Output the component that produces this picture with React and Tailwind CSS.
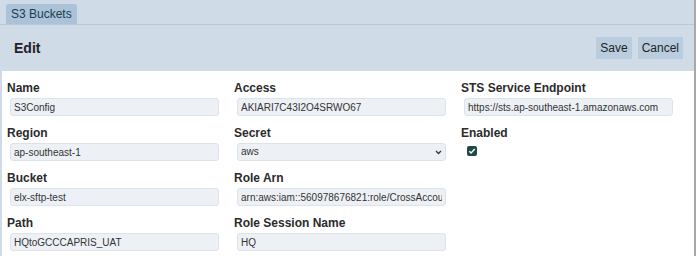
const Field = ({ label, value, children }) => (
    <div className="mb-[9px]">
        <div className="text-xs font-bold leading-4 text-[#2b2b2b]">{label}</div>
        {children || (
            <input
                readOnly
                value={value}
                className="mt-[2px] ml-[3px] block h-[18px] w-[209px] rounded-[3px] border border-[#dce3eb] bg-[#edf1f6] px-[3px] text-[10px] leading-4 text-[#333] outline-none"
            />
        )}
    </div>
);

const App = () => {
    return (
        <div className="h-[256px] w-[696px] overflow-hidden border-r-2 border-[#a8a8a8] bg-white font-['Liberation_Sans',Arial,sans-serif]">
            {/* tab strip */}
            <div className="flex h-[25px] items-end border-b border-[#b5c9db] bg-[#cfdbe6] pl-[6px]">
                <div className="flex h-[20px] items-center rounded-t-[3px] bg-[#aac3d8] px-[5px] text-xs text-[#1c3a4c]">
                    S3 Buckets
                </div>
            </div>

            {/* header */}
            <div className="flex h-[46px] items-center justify-between bg-[#cfdbe6] pl-[14px] pr-[11px]">
                <h1 className="text-sm font-bold text-[#222]">Edit</h1>
                <div className="flex gap-[6px]">
                    <button className="h-[22px] bg-[#b9cddf] px-[4px] text-xs text-[#222]">Save</button>
                    <button className="h-[22px] bg-[#b9cddf] px-[4px] text-xs text-[#222]">Cancel</button>
                </div>
            </div>

            {/* form */}
            <div className="flex h-[185px] border-l-2 border-[#cfdbe6] pl-[5px] pt-[9px]">
                <div className="w-[227px]">
                    <Field label="Name" value="S3Config" />
                    <Field label="Region" value="ap-southeast-1" />
                    <Field label="Bucket" value="elx-sftp-test" />
                    <Field label="Path" value="HQtoGCCCAPRIS_UAT" />
                </div>
                <div className="w-[227px]">
                    <Field label="Access" value="AKIARI7C43I2O4SRWO67" />
                    <Field label="Secret">
                        <div className="relative mt-[2px] ml-[3px] w-[209px]">
                            <select
                                defaultValue="aws"
                                className="block h-[18px] w-full appearance-none rounded-[3px] border border-[#dce3eb] bg-[#edf1f6] px-[3px] text-[10px] leading-4 text-[#333] outline-none"
                            >
                                <option value="aws">aws</option>
                            </select>
                            <svg className="pointer-events-none absolute right-[4px] top-[7px]" width="7" height="5" viewBox="0 0 7 5">
                                <path d="M1 1l2.5 2.5L6 1" fill="none" stroke="#333" strokeWidth="1.3" />
                            </svg>
                        </div>
                    </Field>
                    <Field label="Role Arn" value="arn:aws:iam::560978676821:role/CrossAccountRole" />
                    <Field label="Role Session Name" value="HQ" />
                </div>
                <div className="w-[227px]">
                    <Field label="STS Service Endpoint" value="https://sts.ap-southeast-1.amazonaws.com" />
                    <Field label="Enabled">
                        <div className="mt-[5px] ml-[6px] flex h-[10px] w-[10px] items-center justify-center rounded-[2px] bg-[#1e4a44]">
                            <svg width="8" height="8" viewBox="0 0 8 8">
                                <path d="M1.3 4.2l1.8 1.8 3.6-4" fill="none" stroke="#fff" strokeWidth="1.4" />
                            </svg>
                        </div>
                    </Field>
                </div>
            </div>
        </div>
    );
};

export default App;
